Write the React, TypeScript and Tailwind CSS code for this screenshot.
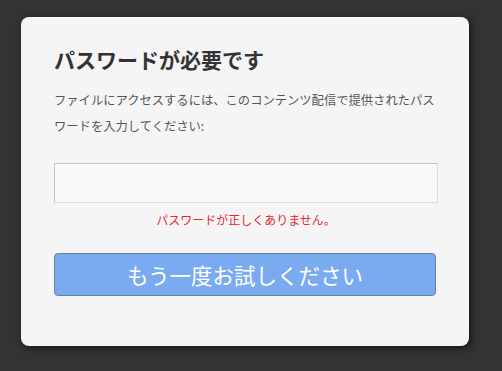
export default function App() {
  return (
    <div
      className="min-h-[371px] w-full bg-[#333333] pl-[21px] pt-[17px]"
      style={{ fontFamily: '"Noto Sans CJK JP", "Noto Sans", sans-serif' }}
    >
      <div className="flex h-[329px] w-[448px] flex-col rounded-[8px] bg-[#f5f5f5] pl-[33px] pr-[31px] pt-[27px] shadow-[2px_2px_6px_rgba(0,0,0,0.6)]">
        <h1 className="text-[21px] font-semibold leading-[30px] text-[#333333]">
          パスワードが必要です
        </h1>
        <p className="mt-[13px] text-[12.3px] leading-[26px] text-[#555555]">
          ファイルにアクセスするには、このコンテンツ配信で提供されたパスワードを入力してください:
        </p>
        <input
          type="password"
          className="mt-[24px] h-[40px] w-full border border-[#dddddd] border-t-[#c4c4c4] border-l-[#c4c4c4] bg-[#f9f9f9] px-2 outline-none"
        />
        <p className="mt-[8px] text-center text-[12px] leading-[18px] text-[#e8262d]">
          パスワードが正しくありません。
        </p>
        <button className="mt-[24px] h-[43px] w-[382px] rounded-[4px] border border-[#6b7f9c] bg-[#7aabf0] text-[21.5px] leading-none text-white">
          もう一度お試しください
        </button>
      </div>
    </div>
  );
}
